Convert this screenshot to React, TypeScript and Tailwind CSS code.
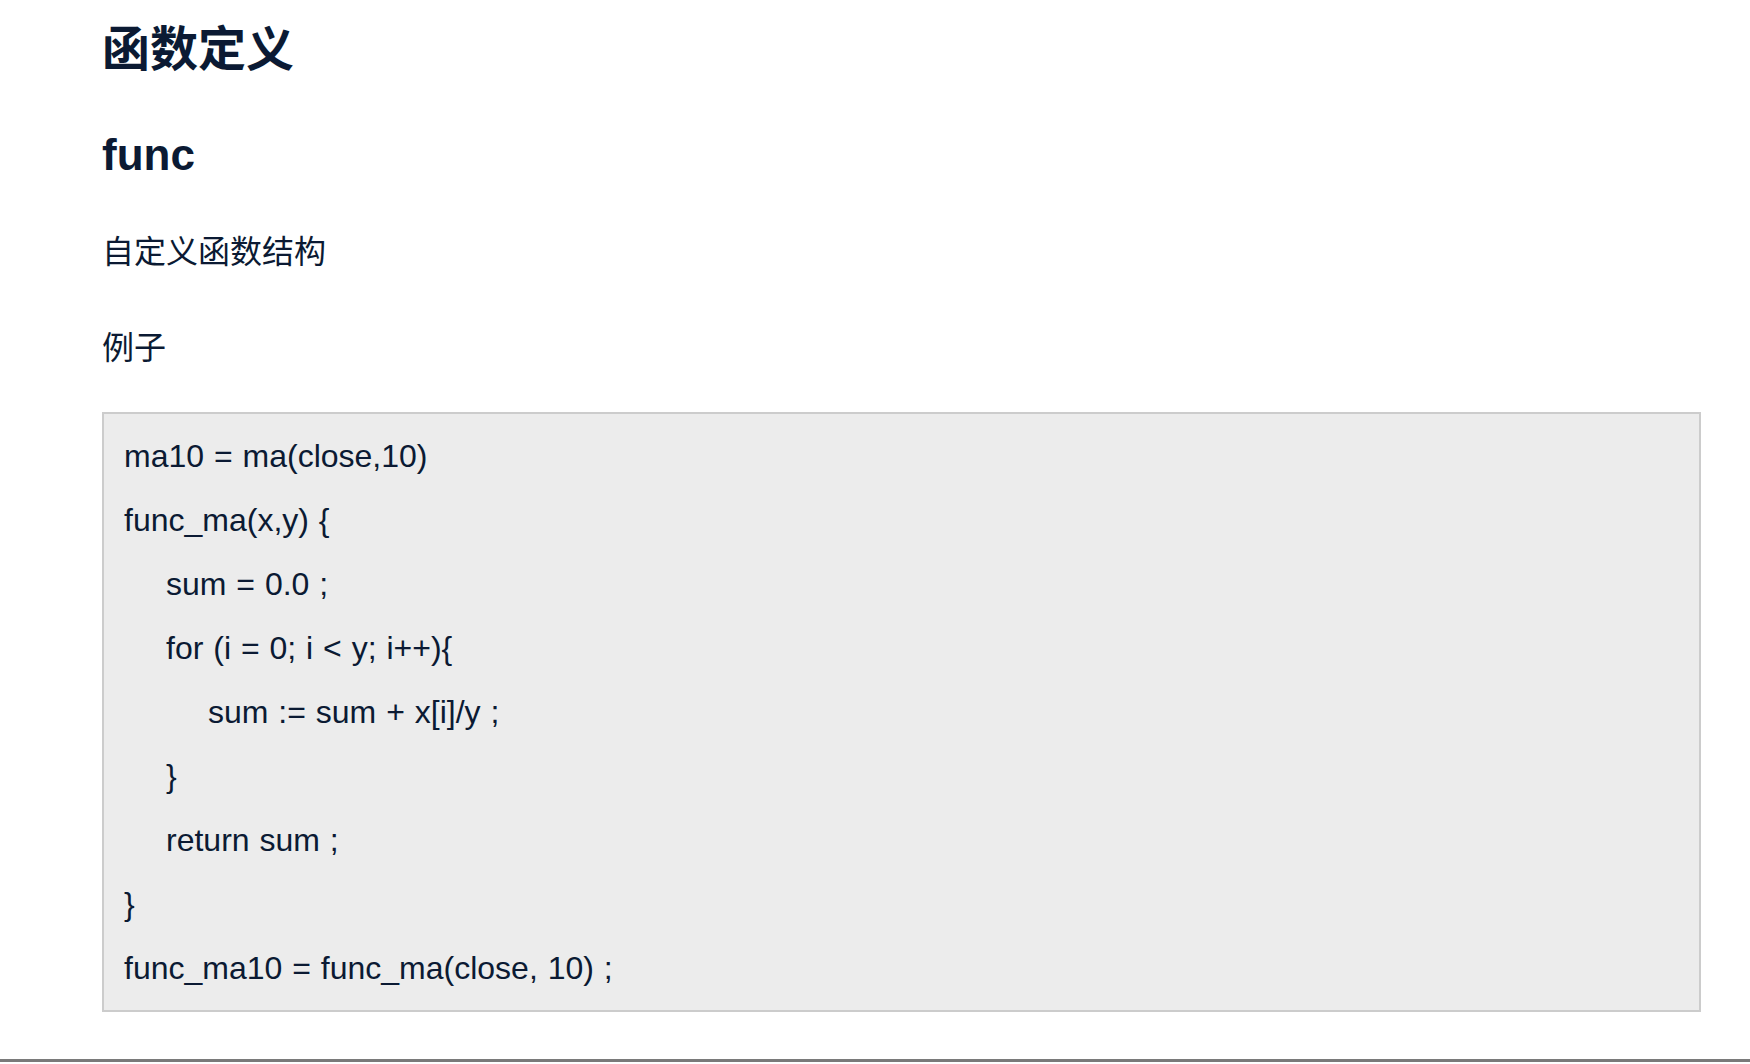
const font = "font-['Liberation_Sans','Noto_Sans_CJK_SC',sans-serif]";

const codeLines: { text: string; indent: number }[] = [
  { text: "ma10 = ma(close,10)", indent: 0 },
  { text: "func_ma(x,y) {", indent: 0 },
  { text: "sum = 0.0 ;", indent: 1 },
  { text: "for (i = 0; i < y; i++){", indent: 1 },
  { text: "sum := sum + x[i]/y ;", indent: 2 },
  { text: "}", indent: 1 },
  { text: "return sum ;", indent: 1 },
  { text: "}", indent: 0 },
  { text: "func_ma10 = func_ma(close, 10) ;", indent: 0 },
];

const indentClass = ["pl-0", "pl-[42px]", "pl-[84px]"];

export default function App() {
  return (
    <div className={`${font} min-h-screen bg-white text-[#0b1a33]`}>
      <div className="pl-[102px] pr-[49px] pt-[18px]">
        <h1 className="text-[48px] leading-[64px] font-bold">函数定义</h1>
        <h2 className="mt-[41px] text-[44px] leading-[64px] font-bold">func</h2>
        <p className="mt-[33px] text-[32px] leading-[64px]">自定义函数结构</p>
        <p className="mt-8 text-[32px] leading-[64px]">例子</p>
        <div className="mt-8 border-2 border-[#cccccc] bg-[#ececec] px-[20px] py-[10px]">
          {codeLines.map((line, i) => (
            <div
              key={i}
              className={`text-[32px] leading-[64px] whitespace-pre [word-spacing:1px] ${indentClass[line.indent]}`}
            >
              {line.text}
            </div>
          ))}
        </div>
      </div>
      <div className="mt-[47px] h-[3px] bg-[#7a7a7a]"></div>
    </div>
  );
}
